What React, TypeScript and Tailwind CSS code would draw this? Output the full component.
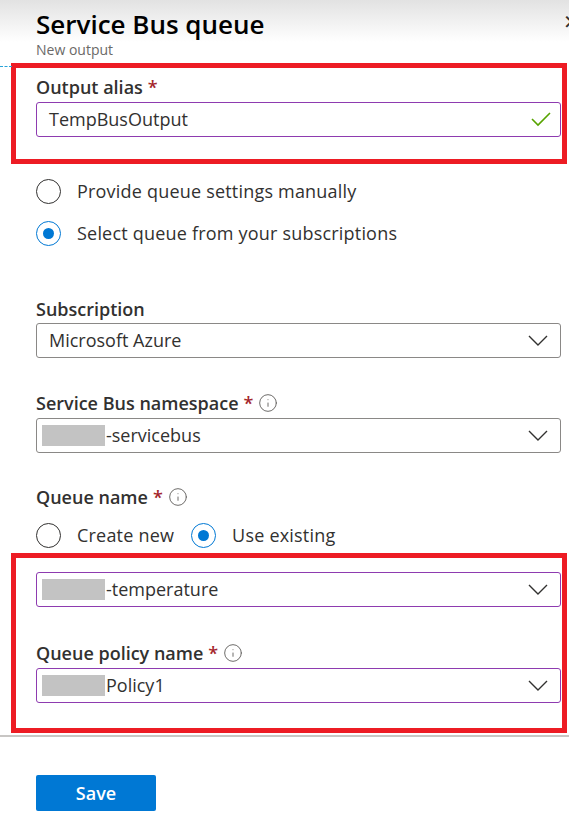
import { Info } from 'lucide-react';

const FONT = "font-['Open_Sans','Liberation_Sans',sans-serif]";

interface LabelProps {
  text: string;
  required?: boolean;
  info?: boolean;
}

function FieldLabel({ text, required, info }: LabelProps) {
  return (
    <div className="flex h-[24px] items-center text-[18px] leading-[24px] font-semibold text-[#323130]">
      <span>{text}</span>
      {required && <span className="ml-[5px] text-[#a4262c]">*</span>}
      {info && <Info className="ml-[5px] h-[20px] w-[20px] text-[#605e5c]" strokeWidth={1.1} />}
    </div>
  );
}

function Chevron() {
  return (
    <svg width="20" height="11" viewBox="0 0 20 11" fill="none">
      <polyline points="1,1 10,10 19,1" stroke="#323130" strokeWidth="1.4" />
    </svg>
  );
}

interface SelectProps {
  value: string;
  redacted?: boolean;
  highlight?: boolean;
}

function SelectBox({ value, redacted, highlight }: SelectProps) {
  return (
    <div
      className={`flex h-[35px] items-center justify-between rounded-[3px] border pr-[12px] ${
        highlight ? 'border-[#8e3bb0]' : 'border-[#8a8886]'
      } ${redacted ? 'pl-[5px]' : 'pl-[12px]'}`}
    >
      <div className="flex items-center text-[18px] text-[#323130]">
        {redacted && <span className="mr-px inline-block h-[21px] w-[63px] bg-[#c3c3c3]" />}
        <span>{value}</span>
      </div>
      <Chevron />
    </div>
  );
}

function Radio({ checked, label }: { checked?: boolean; label: string }) {
  return (
    <div className="flex h-[24px] items-center">
      <span
        className={`flex h-[25px] w-[25px] items-center justify-center rounded-full border ${
          checked ? 'border-[#0078d4]' : 'border-[#323130]'
        }`}
      >
        {checked && <span className="h-[11px] w-[11px] rounded-full bg-[#0078d4]" />}
      </span>
      <span className="ml-[16px] text-[18px] tracking-[0.2px] text-[#323130]">{label}</span>
    </div>
  );
}

export default function App() {
  return (
    <div className={`relative min-h-[839px] w-[569px] overflow-hidden bg-white ${FONT}`}>
      <div className="absolute top-[66px] left-0 w-[12px] border-t border-dashed border-[#29a3d8]" />
      <span className="absolute top-[10px] left-[563px] text-[20px] leading-[24px] text-[#323130]">✕</span>

      <div className="h-[63px] bg-[linear-gradient(to_bottom,#e2e2e2,#ffffff_42px)] pt-[9px] pl-[36px]">
        <h1 className="text-[26px] leading-[30px] font-semibold text-black">Service Bus queue</h1>
        <p className="mt-[2px] text-[14px] leading-[18px] text-[#6b6967]">New output</p>
      </div>

      <div className="ml-[11px] w-[556px] border-[5px] border-[#ed1c24] pt-[7px] pr-[1px] pb-[22px] pl-[20px]">
        <FieldLabel text="Output alias" required />
        <div className="mt-[3px] flex h-[35px] items-center justify-between rounded-[3px] border border-[#8e3bb0] pr-[9px] pl-[12px]">
          <span className="text-[18px] text-[#323130]">TempBusOutput</span>
          <svg width="20" height="15" viewBox="0 0 20 15" fill="none">
            <polyline points="1,7 7,13 19,1" stroke="#57a300" strokeWidth="1.6" />
          </svg>
        </div>
      </div>

      <div className="mt-[15px] flex flex-col gap-[18px] pl-[36px]">
        <Radio label="Provide queue settings manually" />
        <Radio checked label="Select queue from your subscriptions" />
      </div>

      <div className="mt-[52px] w-[561px] pl-[36px]">
        <FieldLabel text="Subscription" />
        <div className="mt-[2px]">
          <SelectBox value="Microsoft Azure" />
        </div>

        <div className="mt-[33px]">
          <FieldLabel text="Service Bus namespace" required info />
        </div>
        <div className="mt-[3px]">
          <SelectBox value="-servicebus" redacted />
        </div>

        <div className="mt-[32px]">
          <FieldLabel text="Queue name" required info />
        </div>
        <div className="mt-[14px] flex items-center">
          <Radio label="Create new" />
          <div className="ml-[17px]">
            <Radio checked label="Use existing" />
          </div>
        </div>
      </div>

      <div className="mt-[6px] ml-[11px] w-[556px] border-[5px] border-[#ed1c24] pt-[14px] pr-[1px] pb-[25px] pl-[20px]">
        <SelectBox value="-temperature" redacted highlight />
        <div className="mt-[34px]">
          <FieldLabel text="Queue policy name" required info />
        </div>
        <div className="mt-[3px]">
          <SelectBox value="Policy1" redacted highlight />
        </div>
      </div>

      <div className="mt-[2px] border-t-2 border-[#c8c6c4]" />

      <div className="pt-[38px] pl-[36px]">
        <button className="h-[36px] w-[120px] rounded-[2px] bg-[#0078d4] text-[18px] font-semibold text-white">
          Save
        </button>
      </div>
    </div>
  );
}
